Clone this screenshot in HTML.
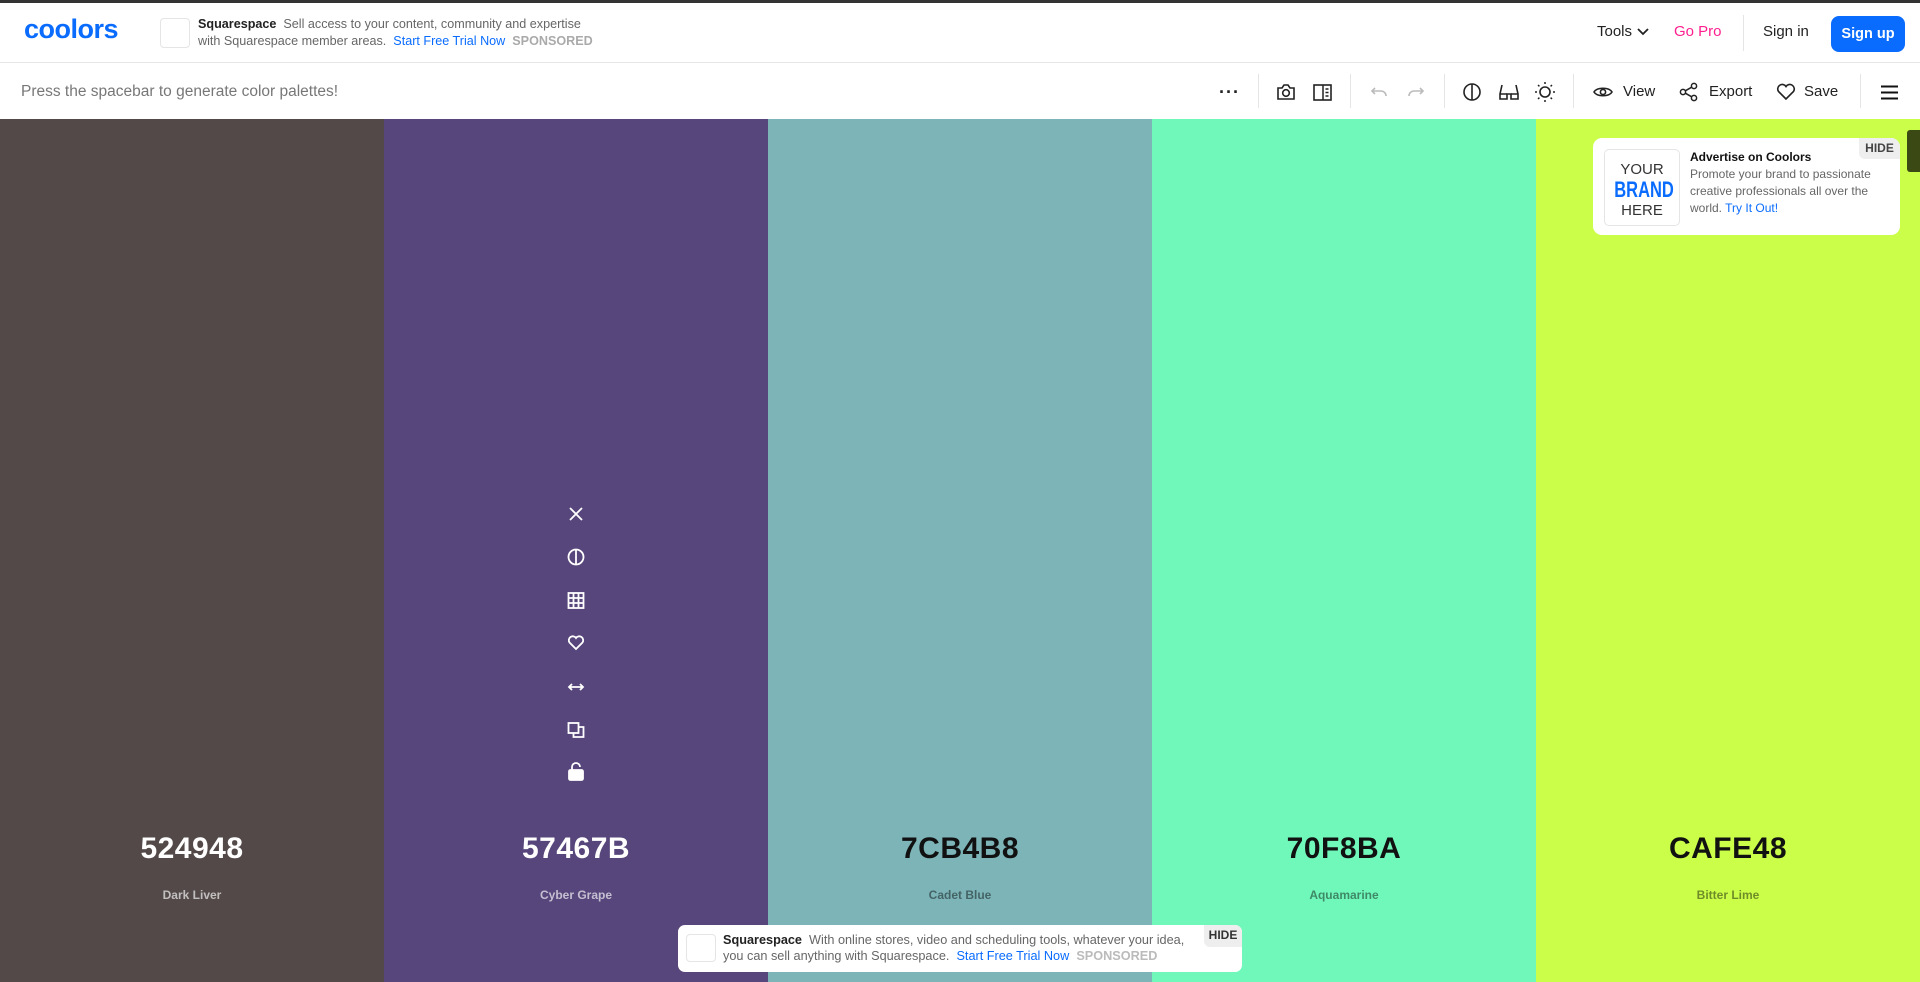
<!DOCTYPE html>
<html><head><meta charset="utf-8"><style>
*{margin:0;padding:0;box-sizing:border-box}
body{width:1920px;height:982px;overflow:hidden;font-family:"Liberation Sans",Arial,sans-serif;background:#fff;position:relative}
.a{position:absolute}
.topline{left:0;top:0;width:1920px;height:3px;background:#333}
.hdr{left:0;top:3px;width:1920px;height:60px;border-bottom:1px solid #e6e6e6}
.col{top:119px;width:384px;height:863px}
.hex{width:384px;text-align:center;font-size:30px;font-weight:700;letter-spacing:.5px}
.nm{width:384px;text-align:center;font-size:12px;font-weight:700}
.div{width:1px;height:34px;background:#e5e5e5;top:74px}
svg{display:block}
.ic{position:absolute}
</style></head><body>
<div class="a topline"></div>
<div class="a hdr"></div>
<div class="a" style="left:24px;top:14px;font-size:27px;font-weight:900;color:#0a6cff;letter-spacing:-0.5px">coolors</div>
<div class="a" style="left:160px;top:18px;width:30px;height:30px;border:1px solid #e5e5e5;border-radius:4px"></div>
<div class="a" style="left:198px;top:16px;font-size:12.6px;line-height:17px;color:#666"><b style="color:#222;font-weight:600">Squarespace</b>&nbsp; Sell access to your content, community and expertise<br>with Squarespace member areas.&nbsp; <span style="color:#0a6cff">Start Free Trial Now</span>&nbsp; <b style="color:#aaa;font-weight:600">SPONSORED</b></div>
<div class="a" style="left:1597px;top:23px;font-size:15px;color:#222">Tools <svg style="display:inline;vertical-align:middle" width="14" height="10" viewBox="0 0 14 10"><path d="M2 2l5 5 5-5" fill="none" stroke="#222" stroke-width="1.8"/></svg></div>
<div class="a" style="left:1674px;top:23px;font-size:15px;color:#ff1f8e">Go Pro</div>
<div class="a" style="left:1743px;top:15px;width:1px;height:36px;background:#e5e5e5"></div>
<div class="a" style="left:1763px;top:23px;font-size:15px;color:#222">Sign in</div>
<div class="a" style="left:1831px;top:16px;width:74px;height:36px;background:#0a6cff;border-radius:8px;color:#fff;font-weight:700;font-size:14.5px;text-align:center;line-height:36px">Sign up</div>

<div class="a" style="left:21px;top:83px;font-size:15.5px;color:#777">Press the spacebar to generate color palettes!</div>
<div class="a" style="left:1219px;top:82px;font-size:18px;color:#222;font-weight:700;letter-spacing:1px">···</div>
<div class="a div" style="left:1258px"></div>
<svg class="ic" style="left:1276px;top:83px" width="20" height="18" viewBox="0 0 20 18"><path d="M2 5h4l2-3h4l2 3h4v11H2z" fill="none" stroke="#222" stroke-width="1.6"/><circle cx="10" cy="10" r="3.3" fill="none" stroke="#222" stroke-width="1.6"/></svg>
<svg class="ic" style="left:1313px;top:84px" width="19" height="17" viewBox="0 0 19 17"><rect x="1" y="1" width="17" height="15" fill="none" stroke="#222" stroke-width="1.6"/><path d="M10 1v15M12.5 5h3M12.5 8.5h3M12.5 12h3" stroke="#222" stroke-width="1.5"/></svg>
<div class="a div" style="left:1350px"></div>
<svg class="ic" style="left:1370px;top:85px" width="18" height="14" viewBox="0 0 18 14"><path d="M5 3L2 6l3 3M2 6h9a5 5 0 0 1 5 5" fill="none" stroke="#bbb" stroke-width="1.6"/></svg>
<svg class="ic" style="left:1407px;top:85px" width="18" height="14" viewBox="0 0 18 14"><path d="M13 3l3 3-3 3M16 6H7a5 5 0 0 0-5 5" fill="none" stroke="#bbb" stroke-width="1.6"/></svg>
<div class="a div" style="left:1444px"></div>
<svg class="ic" style="left:1462px;top:82px" width="20" height="20" viewBox="0 0 20 20"><circle cx="10" cy="10" r="8" fill="none" stroke="#222" stroke-width="1.6"/><path d="M10 2v16" stroke="#222" stroke-width="1.6"/></svg>
<svg class="ic" style="left:1498px;top:82px" width="22" height="20" viewBox="0 0 22 20"><path d="M4 3L2 12v5h7v-5h4v5h7v-5L18 3" fill="none" stroke="#222" stroke-width="1.6"/><path d="M2 12h7M13 12h7" stroke="#222" stroke-width="1.6"/></svg>
<svg class="ic" style="left:1534px;top:81px" width="22" height="22" viewBox="0 0 22 22"><circle cx="11" cy="11" r="5" fill="none" stroke="#222" stroke-width="1.6"/><path d="M11 1v2M11 19v2M1 11h2M19 11h2M4 4l1.4 1.4M16.6 16.6L18 18M4 18l1.4-1.4M16.6 5.4L18 4" stroke="#222" stroke-width="1.5"/></svg>
<div class="a div" style="left:1573px"></div>
<svg class="ic" style="left:1593px;top:85px" width="20" height="14" viewBox="0 0 20 14"><path d="M1 7c3-5 15-5 18 0c-3 5-15 5-18 0z" fill="none" stroke="#222" stroke-width="1.6"/><circle cx="10" cy="7" r="2.6" fill="none" stroke="#222" stroke-width="1.6"/></svg>
<div class="a" style="left:1623px;top:83px;font-size:15px;color:#222">View</div>
<svg class="ic" style="left:1679px;top:82px" width="20" height="20" viewBox="0 0 20 20"><circle cx="4" cy="10" r="2.6" fill="none" stroke="#222" stroke-width="1.5"/><circle cx="15" cy="4" r="2.6" fill="none" stroke="#222" stroke-width="1.5"/><circle cx="15" cy="16" r="2.6" fill="none" stroke="#222" stroke-width="1.5"/><path d="M6.3 8.8l6.4-3.6M6.3 11.2l6.4 3.6" stroke="#222" stroke-width="1.5"/></svg>
<div class="a" style="left:1709px;top:83px;font-size:15px;color:#222">Export</div>
<svg class="ic" style="left:1776px;top:83px" width="20" height="18" viewBox="0 0 20 18"><path d="M10 16L2.5 8.5a4.2 4.2 0 0 1 7.5-5a4.2 4.2 0 0 1 7.5 5z" fill="none" stroke="#222" stroke-width="1.6"/></svg>
<div class="a" style="left:1804px;top:83px;font-size:15px;color:#222">Save</div>
<div class="a div" style="left:1860px"></div>
<svg class="ic" style="left:1881px;top:85px" width="17" height="15" viewBox="0 0 17 15"><path d="M0 1.5h17M0 7.5h17M0 13.5h17" stroke="#111" stroke-width="2"/></svg>

<div class="a col" style="left:0;background:#524948"></div>
<div class="a col" style="left:384px;background:#57467b"></div>
<div class="a col" style="left:768px;background:#7cb4b8"></div>
<div class="a col" style="left:1152px;background:#70f8ba"></div>
<div class="a col" style="left:1536px;background:#cafe48"></div>

<div class="a hex" style="left:0;top:832px;color:#fff">524948</div>
<div class="a hex" style="left:384px;top:832px;color:#fff">57467B</div>
<div class="a hex" style="left:768px;top:832px;color:#111">7CB4B8</div>
<div class="a hex" style="left:1152px;top:832px;color:#111">70F8BA</div>
<div class="a hex" style="left:1536px;top:832px;color:#111">CAFE48</div>
<div class="a nm" style="left:0;top:888px;color:rgba(255,255,255,.65)">Dark Liver</div>
<div class="a nm" style="left:384px;top:888px;color:rgba(255,255,255,.65)">Cyber Grape</div>
<div class="a nm" style="left:768px;top:888px;color:rgba(0,0,0,.45)">Cadet Blue</div>
<div class="a nm" style="left:1152px;top:888px;color:rgba(0,0,0,.45)">Aquamarine</div>
<div class="a nm" style="left:1536px;top:888px;color:rgba(0,0,0,.45)">Bitter Lime</div>

<svg class="ic" style="left:566px;top:504px" width="20" height="280" viewBox="0 0 20 280" fill="none" stroke="#fff" stroke-width="1.8">
<path d="M4 4l12 12M16 4L4 16"/>
<circle cx="10" cy="53" r="7.5"/><path d="M10 45.5v15"/>
<rect x="2.5" y="89" width="15" height="15"/><path d="M7.5 89v15M12.5 89v15M2.5 94h15M2.5 99h15"/>
<path d="M10 145L3.5 138.5a3.8 3.8 0 0 1 6.5-4.5a3.8 3.8 0 0 1 6.5 4.5z"/>
<path d="M3 183h14M6 180l-3 3 3 3M14 180l3 3-3 3"/>
<rect x="2.5" y="219" width="10" height="10"/><path d="M12.5 223h5v10h-10v-4"/>
<path d="M6 266v-3a4 4 0 0 1 8 0" /><rect x="3" y="266" width="14" height="10" rx="1.5" fill="#fff"/>
</svg>

<div class="a" style="left:1593px;top:138px;width:307px;height:97px;background:#fff;border-radius:9px;overflow:hidden">
 <div class="a" style="left:11px;top:11px;width:76px;height:77px;border:1px solid #e5e5e5;border-radius:5px;text-align:center;color:#333">
  <div style="font-size:15px;margin-top:12px;line-height:16px">YOUR</div>
  <div style="font-size:22px;font-weight:700;color:#0a6cff;line-height:24px;transform:scaleX(.75)">BRAND</div>
  <div style="font-size:15px;line-height:18px">HERE</div>
 </div>
 <div class="a" style="left:97px;top:11px;font-size:12px;line-height:17px;color:#666;width:200px"><b style="color:#111">Advertise on Coolors</b><br>Promote your brand to passionate creative professionals all over the world. <span style="color:#0a6cff">Try It Out!</span></div>
 <div class="a" style="right:0;top:0;width:41px;height:21px;background:#eee;border-bottom-left-radius:6px;font-size:12px;font-weight:700;color:#444;text-align:center;line-height:21px">HIDE</div>
</div>
<div class="a" style="left:1907px;top:130px;width:13px;height:42px;background:#3b4a14;border-radius:3px 0 0 3px"></div>

<div class="a" style="left:678px;top:925px;width:564px;height:47px;background:#fff;border-radius:7px;overflow:hidden">
 <div class="a" style="left:8px;top:9px;width:30px;height:28px;border:1px solid #e5e5e5;border-radius:4px"></div>
 <div class="a" style="left:45px;top:7px;font-size:12.7px;line-height:16px;color:#666;white-space:nowrap"><b style="color:#222;font-weight:600">Squarespace</b>&nbsp; With online stores, video and scheduling tools, whatever your idea,<br>you can sell anything with Squarespace.&nbsp; <span style="color:#0a6cff">Start Free Trial Now</span>&nbsp; <b style="color:#bbb;font-weight:600">SPONSORED</b></div>
 <div class="a" style="right:0;top:0;width:38px;height:22px;background:#eee;border-bottom-left-radius:6px;font-size:12px;font-weight:700;color:#333;text-align:center;line-height:20px">HIDE</div>
</div>
</body></html>
